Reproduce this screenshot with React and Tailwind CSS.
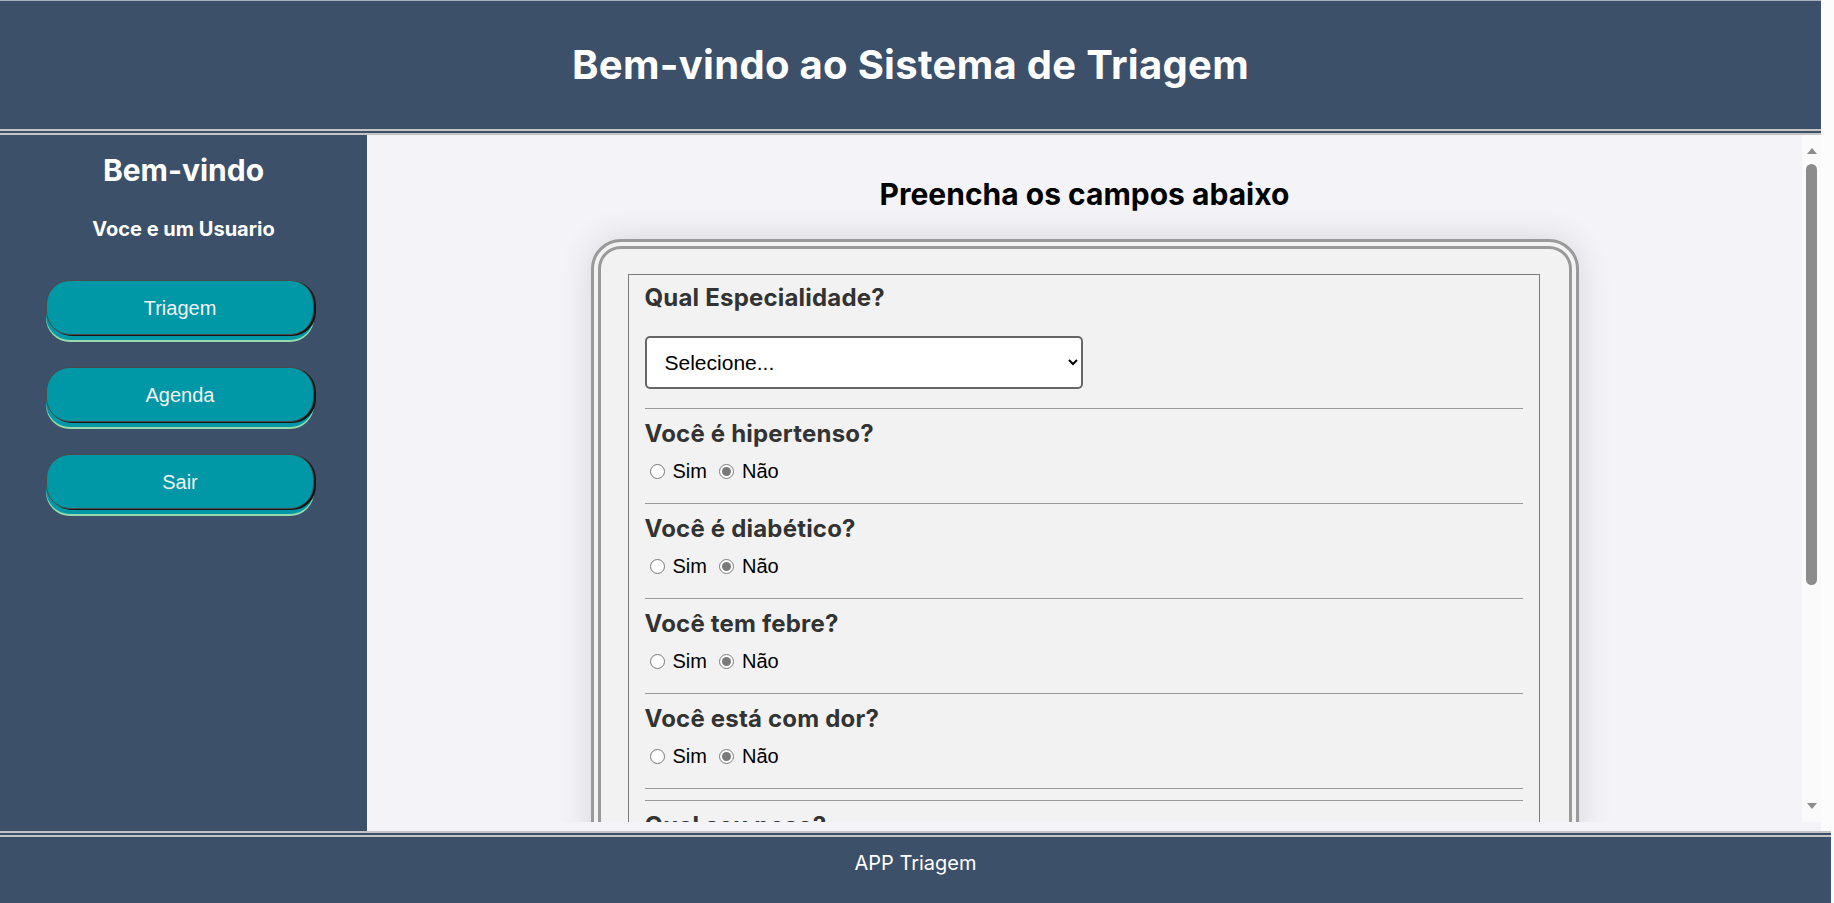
import React from "react";

const questions = [
  { id: "hipertenso", label: "Você é hipertenso?" },
  { id: "diabetico", label: "Você é diabético?" },
  { id: "febre", label: "Você tem febre?" },
  { id: "dor", label: "Você está com dor?" },
];

function SideButton({ children }) {
  return (
    <button className="w-[268px] h-[55px] rounded-[24px] bg-[#0097a7] border border-[#4a4a4a] text-[#f2f2f2] text-[20px] font-['Liberation_Sans',Arial,sans-serif] shadow-[2px_1px_0_#161616,0_5px_0_#0097a7,0_7px_0_#93dbad]">
      {children}
    </button>
  );
}

function YesNo({ name }) {
  return (
    <div className="h-[24px] mt-[11px] flex items-center text-[20px] text-black font-['Liberation_Sans',Arial,sans-serif]">
      <label className="flex items-center">
        <input
          type="radio"
          name={name}
          className="w-[15px] h-[15px] ml-[5px] mr-[8px] accent-[#7a7a7a]"
        />
        Sim
      </label>
      <label className="flex items-center ml-[7px]">
        <input
          type="radio"
          name={name}
          defaultChecked
          className="w-[15px] h-[15px] ml-[5px] mr-[8px] accent-[#7a7a7a]"
        />
        Não
      </label>
    </div>
  );
}

export default function App() {
  return (
    <div className="w-[1834px] h-[903px] overflow-hidden flex flex-col bg-[#fcfcfd] font-['Inter',sans-serif]">
      {/* Header */}
      <header className="w-[1821px] h-[135px] shrink-0 flex items-center justify-center bg-[#3c5069] border-t border-t-[#a9b1bc] border-b-[6px] border-b-[#c4c4c4] border-double">
        <h1 className="text-white text-[40px] font-bold tracking-[0.3px]">
          Bem-vindo ao Sistema de Triagem
        </h1>
      </header>

      {/* Middle */}
      <div className="w-[1821px] h-[696px] shrink-0 flex">
        {/* Sidebar */}
        <aside className="w-[367px] shrink-0 bg-[#3c5069] flex flex-col items-center pt-[17px]">
          <h2 className="text-white text-[30px] leading-[36px] font-bold">Bem-vindo</h2>
          <p className="text-white text-[20px] leading-[24px] font-bold mt-[29px]">
            Voce e um Usuario
          </p>
          <div className="self-start ml-[46px] mt-[39px] flex flex-col gap-[32px]">
            <SideButton>Triagem</SideButton>
            <SideButton>Agenda</SideButton>
            <SideButton>Sair</SideButton>
          </div>
        </aside>

        {/* Main */}
        <main className="flex-1 flex flex-col bg-[#f4f4f8]">
          <div className="h-[687px] flex">
            <div className="flex-1 overflow-hidden flex flex-col items-center pt-[41px]">
              <h2 className="text-[30px] leading-[36px] font-bold text-black">
                Preencha os campos abaixo
              </h2>

              {/* Card */}
              <div className="mt-[27px] w-[988px] shrink-0 rounded-[30px] border-[10px] border-double border-[#999] bg-[#f2f2f2] shadow-[0_0_35px_rgba(0,0,0,0.12)] pt-[25px] pl-[27px] pr-[29px] pb-[40px]">
                <div className="border border-[#7a7a7a] px-[16px] text-[#333]">
                  <div className="pt-[8px] pb-[19px] border-b border-[#999]">
                    <h3 className="text-[24px] leading-[29px] font-bold tracking-[0.2px]">Qual Especialidade?</h3>
                    <select className="mt-[24px] w-[438px] h-[53px] bg-white border-2 border-[#666] rounded-[5px] pl-[14px] pr-[8px] text-[21px] text-black font-['Liberation_Sans',Arial,sans-serif]">
                      <option>Selecione...</option>
                      <option>Clínica Geral</option>
                      <option>Cardiologia</option>
                      <option>Pediatria</option>
                    </select>
                  </div>

                  {questions.map((q) => (
                    <div key={q.id} className="pt-[10px] pb-[20px] border-b border-[#999]">
                      <h3 className="text-[24px] leading-[29px] font-bold tracking-[0.2px]">{q.label}</h3>
                      <YesNo name={q.id} />
                    </div>
                  ))}

                  <div className="h-[12px] border-b border-[#999]"></div>

                  <div className="pt-[10px] pb-[20px]">
                    <h3 className="text-[24px] leading-[29px] font-bold tracking-[0.2px]">Qual seu peso?</h3>
                    <input
                      type="text"
                      className="mt-[24px] w-[438px] h-[53px] bg-white border-2 border-[#666] rounded-[5px] px-[14px] text-[21px]"
                    />
                  </div>
                </div>
              </div>
            </div>

            {/* Scrollbar */}
            <div className="w-[19px] shrink-0 bg-[#fafafa] flex flex-col items-center pt-[13px] pb-[13px]">
              <svg width="10" height="6" viewBox="0 0 10 6">
                <path d="M0 6 L5 0 L10 6 Z" fill="#8c8c8c" />
              </svg>
              <div className="mt-[10px] w-[11px] h-[421px] rounded-full bg-[#8c8c8c]"></div>
              <div className="flex-1"></div>
              <svg width="10" height="6" viewBox="0 0 10 6">
                <path d="M0 0 L10 0 L5 6 Z" fill="#8c8c8c" />
              </svg>
            </div>
          </div>
          <div className="flex-1"></div>
        </main>
      </div>

      {/* Footer */}
      <footer className="w-[1831px] h-[72px] shrink-0 flex items-center justify-center pb-[14px] bg-[#3c5069] border-t-[6px] border-double border-[#c4c4c4]">
        <span className="text-white text-[20px]">APP Triagem</span>
      </footer>
    </div>
  );
}
